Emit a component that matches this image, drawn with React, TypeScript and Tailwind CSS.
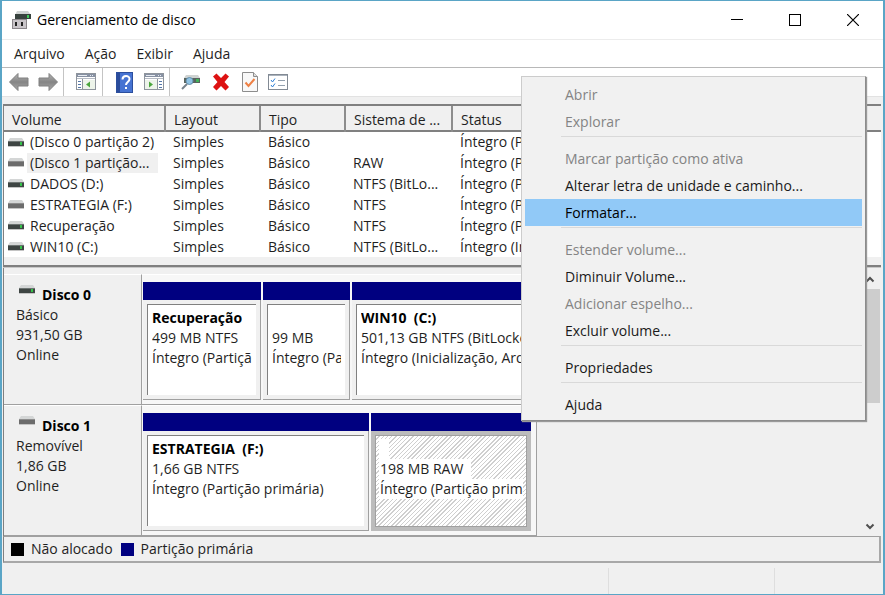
import React from "react";

type Drive = "fixed" | "removable";

function DriveIcon({ kind }: { kind: Drive }) {
  return (
    <svg width="16" height="9" viewBox="0 0 16 9" className="shrink-0" aria-hidden="true">
      <path d="M2 0h12l2 3H0z" fill="#d4d6d6" />
      <rect y="3" width="16" height="5" fill={kind === "fixed" ? "#3e4543" : "#6c6c6c"} />
      <rect y="3" width="16" height="1" fill={kind === "fixed" ? "#6d7472" : "#8d8d8d"} />
      <rect y="8" width="16" height="1" fill="#c4c4c4" />
      {kind === "fixed" && <rect x="12" y="4" width="2" height="3" fill="#35c24a" />}
    </svg>
  );
}

function AppIcon() {
  return (
    <svg width="20" height="20" viewBox="0 0 20 20" aria-hidden="true">
      <path d="M6 1h11l3 4H4z" fill="#cfd3d2" />
      <rect x="4" y="4" width="16" height="5" fill="#37423e" />
      <rect x="16" y="5" width="2" height="3" fill="#3fc95a" />
      <rect x="1.500" y="9.500" width="14" height="9" fill="#c9c5c9" stroke="#8b878b" />
      <rect x="4" y="12" width="2" height="4" fill="#222" />
      <rect x="10" y="12" width="2" height="4" fill="#222" />
    </svg>
  );
}

function ArrowIcon({ back }: { back?: boolean }) {
  return (
    <svg width="22" height="20" viewBox="0 0 22 20" aria-hidden="true">
      <defs>
        <linearGradient id={back ? "gb" : "gf"} x1="0" y1="0" x2="0" y2="1">
          <stop offset="0" stopColor="#b4b4b4" />
          <stop offset="0.5" stopColor="#858585" />
          <stop offset="1" stopColor="#a8a8a8" />
        </linearGradient>
      </defs>
      <path
        d={back ? "M1.500 10 L10 1.500 V6 H20 V14 H10 V18.500 Z" : "M20.500 10 L12 1.500 V6 H2 V14 H12 V18.500 Z"}
        fill={back ? "url(#gb)" : "url(#gf)"}
        stroke="#808080"
        strokeLinejoin="round"
      />
    </svg>
  );
}

function PaneIcon({ right }: { right?: boolean }) {
  return (
    <svg width="20" height="18" viewBox="0 0 20 18" aria-hidden="true">
      <rect x="0.500" y="0.500" width="19" height="16" fill="#fff" stroke="#8e949c" />
      <rect x="1" y="1" width="18" height="3" fill="#8791a3" />
      <path d="M14 2.500h1M16 2.500h1M2 2.500h9" stroke="#e8ecf2" />
      <path d="M1 5.500h18" stroke="#b4bac4" />
      {right ? (
        <>
          <rect x="1" y="7" width="12" height="9" fill="#edf4ea" />
          <path d="M5 8.500l4 3-4 3z" fill="#4aa63c" />
          <path d="M13.500 6v10" stroke="#8e949c" />
          <path d="M15 8.500h3M15 11.500h3M15 14.500h3" stroke="#5577a8" />
        </>
      ) : (
        <>
          <rect x="7" y="7" width="12" height="9" fill="#edf4ea" />
          <path d="M14 8.500l-4 3 4 3z" fill="#4aa63c" />
          <path d="M6.500 6v10" stroke="#8e949c" />
          <path d="M2 8.500h3M2 11.500h3M2 14.500h3" stroke="#5577a8" />
        </>
      )}
    </svg>
  );
}

function HelpIcon() {
  return (
    <svg width="17" height="21" viewBox="0 0 17 21" aria-hidden="true">
      <rect x="0.500" y="0.500" width="16" height="20" fill="#4673d2" stroke="#2c4f9e" />
      <rect x="1" y="1" width="3" height="19" fill="#2a4c9c" />
      <path d="M6.500 7.500c0-4.500 7-4.500 7-.5 0 3-3.500 3-3.500 6" fill="none" stroke="#fff" strokeWidth="2" />
      <rect x="9" y="15" width="2" height="2" fill="#fff" />
    </svg>
  );
}

function RescanIcon() {
  return (
    <svg width="20" height="18" viewBox="0 0 20 18" aria-hidden="true">
      <path d="M5 2h12l2 3H3z" fill="#cfd3d2" />
      <rect x="3" y="5" width="16" height="5" fill="#59645f" />
      <rect x="15" y="6" width="3" height="3" fill="#40b457" />
      <circle cx="8.500" cy="8" r="3.500" fill="#8fc3e4" stroke="#648fac" />
      <path d="M6 11l-5 5" stroke="#77828c" strokeWidth="2" />
    </svg>
  );
}

function DeleteIcon() {
  return (
    <svg width="18" height="18" viewBox="0 0 18 18" aria-hidden="true">
      <path
        d="M4.500 0.500L9 5l4.500-4.500 3.500 3L12.500 9l4.500 5-3.500 3.500L9 13l-4.500 4.500L1 14l4.500-5L1 3.500z"
        fill="#dd1212"
      />
    </svg>
  );
}

function CheckDocIcon() {
  return (
    <svg width="16" height="20" viewBox="0 0 16 20" aria-hidden="true">
      <path d="M0.500 0.500h11l4 4v15h-15z" fill="#f8f8f8" stroke="#8d8d8d" />
      <path d="M11.500 0.500v4h4" fill="#ddd" stroke="#8d8d8d" />
      <path d="M3.500 10.500l3 3.500 6-7" fill="none" stroke="#ee8044" strokeWidth="2" />
    </svg>
  );
}

function ListIcon() {
  return (
    <svg width="20" height="16" viewBox="0 0 20 16" aria-hidden="true">
      <rect x="0.500" y="0.500" width="19" height="15" fill="#fff" stroke="#828a94" />
      <rect x="1" y="1" width="18" height="1" fill="#aab2bc" />
      <path d="M3 6l1.500 2L7 4.500M3 11l1.500 2L7 9.500" fill="none" stroke="#2d7fd6" />
      <path d="M10 6.500h7M10 11.500h7" stroke="#93a0ae" />
    </svg>
  );
}

function ToolButton({ label, width, children }: { label: string; width: string; children: React.ReactNode }) {
  return (
    <button type="button" aria-label={label} className={`flex h-7 items-center justify-center ${width}`}>
      {children}
    </button>
  );
}

function ToolDivider() {
  return <span className="h-7 w-px bg-[#c4c4c4]" />;
}

const volumes: { name: string; kind: Drive; fs: string; status: string; selected?: boolean }[] = [
  { name: "(Disco 0 partição 2)", kind: "fixed", fs: "", status: "Íntegro (Partição)" },
  { name: "(Disco 1 partição...", kind: "removable", fs: "RAW", status: "Íntegro (Partição)", selected: true },
  { name: "DADOS (D:)", kind: "fixed", fs: "NTFS (BitLo...", status: "Íntegro (Partição)" },
  { name: "ESTRATEGIA (F:)", kind: "removable", fs: "NTFS", status: "Íntegro (Partição)" },
  { name: "Recuperação", kind: "fixed", fs: "NTFS", status: "Íntegro (Partição)" },
  { name: "WIN10 (C:)", kind: "fixed", fs: "NTFS (BitLo...", status: "Íntegro (Inicialização)" },
];

const columns = ["Volume", "Layout", "Tipo", "Sistema de ...", "Status"];

function VolumeTable() {
  return (
    <div className="border-t-2 border-l border-[#808080] bg-white">
      <table className="w-full table-fixed border-collapse text-left">
        <colgroup>
          <col className="w-[161px]" />
          <col className="w-[95px]" />
          <col className="w-[85px]" />
          <col className="w-[107px]" />
          <col />
        </colgroup>
        <thead>
          <tr className="h-[24px] border-b-2 border-[#808080] bg-[#f0f0f0]">
            {columns.map((c) => (
              <th key={c} className="border-r-2 border-[#8c8c8c] pt-1 pl-2 font-normal last:border-r-0">
                {c}
              </th>
            ))}
          </tr>
        </thead>
        <tbody>
          {volumes.map((v) => (
            <tr key={v.name} className="h-[21px] whitespace-nowrap">
              <td className="p-0">
                <span className="flex items-center gap-[3px] pl-1">
                  <DriveIcon kind={v.kind} />
                  <span className={v.selected ? "w-[131px] bg-[#f0f0f0] pl-[3px]" : "pl-[3px]"}>{v.name}</span>
                </span>
              </td>
              <td className="p-0 pl-2">Simples</td>
              <td className="p-0 pl-2">Básico</td>
              <td className="p-0 pl-2">{v.fs}</td>
              <td className="overflow-hidden p-0 pl-2">{v.status}</td>
            </tr>
          ))}
        </tbody>
      </table>
      <div className="h-2 bg-[#f0f0f0]" />
    </div>
  );
}

type PartitionProps = { title: string; size: string; status: string; width: string; selected?: boolean };

function Partition({ title, size, status, width, selected }: PartitionProps) {
  return (
    <div className={`flex h-[118px] min-w-0 flex-col ${width}`}>
      <div className="h-[18px] bg-[#000080]" />
      {selected ? (
        <div className="flex-1 border-4 border-[#bcbcbc]">
          <div className="h-full border border-[#a0a0a0] bg-[repeating-linear-gradient(135deg,#ffffff_0px,#ffffff_2px,#cfcfcf_2px,#cfcfcf_3px)] px-[3px] pt-[3px] whitespace-nowrap">
            <div className="overflow-hidden">
              <span className="block h-5 w-[10px] bg-white" />
              <span className="block w-[92px] bg-white pl-px">{size}</span>
              <span className="block bg-white pl-px">{status}</span>
            </div>
          </div>
        </div>
      ) : (
        <div className="flex flex-1 flex-col border-r border-b border-[#a0a0a0] bg-[#f0f0f0] p-1">
          <div className="flex-1 border-t border-l border-[#808080] bg-white pt-[3px] pr-1 pl-1 whitespace-nowrap">
            <div className="overflow-hidden">
              <div className="h-5 font-bold whitespace-pre text-black">{title}</div>
              <div>{size}</div>
              <div>{status}</div>
            </div>
          </div>
        </div>
      )}
    </div>
  );
}

function DiskRow({
  name,
  kind,
  lines,
  fill,
  children,
}: {
  name: string;
  kind: Drive;
  lines: string[];
  fill?: boolean;
  children: React.ReactNode;
}) {
  return (
    <section className="flex h-[131px] leading-5">
      <div className="w-[138px] shrink-0 border-t border-r border-b border-t-white border-r-[#a0a0a0] border-b-[#a0a0a0] pt-[10px] pl-3">
        <h2 className="flex gap-[7px] pl-[3px] font-bold text-black">
          <DriveIcon kind={kind} />
          {name}
        </h2>
        {lines.map((l) => (
          <p key={l}>{l}</p>
        ))}
      </div>
      <div
        className={`flex min-w-0 gap-0.5 border-t border-b border-t-white border-b-[#a0a0a0] bg-[#f7f7f7] pt-[7px] pl-px ${
          fill ? "flex-1" : "border-r border-r-[#a0a0a0] pr-[5px]"
        }`}
      >
        {children}
      </div>
    </section>
  );
}

function Chevron({ up }: { up?: boolean }) {
  return (
    <svg width="10" height="7" viewBox="0 0 10 7" aria-hidden="true">
      <path d={up ? "M1.500 5.500L5 2l3.500 3.500" : "M1.500 1.500L5 5l3.500-3.500"} fill="none" stroke="#505050" strokeWidth="2" />
    </svg>
  );
}

const menuGroups: { label: string; disabled?: boolean; active?: boolean }[][] = [
  [
    { label: "Abrir", disabled: true },
    { label: "Explorar", disabled: true },
  ],
  [
    { label: "Marcar partição como ativa", disabled: true },
    { label: "Alterar letra de unidade e caminho..." },
    { label: "Formatar...", active: true },
  ],
  [
    { label: "Estender volume...", disabled: true },
    { label: "Diminuir Volume..." },
    { label: "Adicionar espelho...", disabled: true },
    { label: "Excluir volume..." },
  ],
  [{ label: "Propriedades" }],
  [{ label: "Ajuda" }],
];

function ContextMenu() {
  return (
    <div
      role="menu"
      className="absolute top-[75px] right-[17px] w-[345px] border border-t-[#cccccc] border-r-[#8c8c8c] border-b-[#8c8c8c] border-l-[#cccccc] bg-[#f1f1f1] px-[3px] pt-1 pb-[2px] shadow-[1px_1px_1px_#9a9a9a]"
    >
      {menuGroups.map((group, i) => (
        <div key={group[0].label} role="group">
          {i > 0 && <div className="mt-px mb-2 ml-[36px] h-px bg-[#d9d9d9]" />}
          {group.map((item) => (
            <button
              key={item.label}
              type="button"
              role="menuitem"
              disabled={item.disabled}
              className={`block h-[27px] w-full pl-10 text-left ${
                item.active ? "bg-[#91c9f7] text-black" : item.disabled ? "text-[#848484]" : "text-[#1a1a1a]"
              }`}
            >
              {item.label}
            </button>
          ))}
        </div>
      ))}
    </div>
  );
}

export default function App() {
  return (
    <div className="relative flex min-h-screen flex-col overflow-hidden border-t border-r-2 border-b-2 border-l-2 border-[#5aa5c6] bg-[#f0f0f0] font-['Open_Sans','Noto_Sans',sans-serif] text-[14px] leading-5 text-[#1f1f1f]">
      <header className="flex h-[39px] items-center border-b border-[#ececec] bg-white pr-px pl-[9px]">
        <AppIcon />
        <h1 className="flex-1 pl-[6px] text-black">Gerenciamento de disco</h1>
        <button type="button" aria-label="Minimizar" className="flex h-full w-[58px] items-center justify-center">
          <svg width="12" height="12" viewBox="0 0 12 12"><path d="M0 5.500h12" stroke="#000" /></svg>
        </button>
        <button type="button" aria-label="Maximizar" className="flex h-full w-[58px] items-center justify-center">
          <svg width="12" height="12" viewBox="0 0 12 12"><rect x="0.500" y="0.500" width="11" height="11" fill="none" stroke="#000" /></svg>
        </button>
        <button type="button" aria-label="Fechar" className="flex h-full w-[58px] items-center justify-center">
          <svg width="12" height="12" viewBox="0 0 12 12"><path d="M0 0l12 12M12 0L0 12" stroke="#000" strokeWidth="1.2" /></svg>
        </button>
      </header>

      <nav className="flex h-[28px] items-center gap-5 border-b border-[#b8b8b8] bg-white pl-3">
        <button type="button">Arquivo</button>
        <button type="button">Ação</button>
        <button type="button">Exibir</button>
        <button type="button">Ajuda</button>
      </nav>

      <div className="flex h-[29px] items-center border-b border-[#e2e2e2] bg-white pl-[3px]">
        <ToolButton label="Voltar" width="w-7"><ArrowIcon back /></ToolButton>
        <ToolButton label="Avançar" width="w-[30px]"><ArrowIcon /></ToolButton>
        <ToolDivider />
        <ToolButton label="Mostrar árvore" width="w-[38px] pl-1.5"><PaneIcon /></ToolButton>
        <ToolDivider />
        <ToolButton label="Ajuda" width="w-9 pl-1.5"><HelpIcon /></ToolButton>
        <ToolButton label="Mostrar painel de ações" width="w-[30px]"><PaneIcon right /></ToolButton>
        <ToolDivider />
        <ToolButton label="Examinar discos novamente" width="w-9 pl-1.5"><RescanIcon /></ToolButton>
        <ToolButton label="Excluir" width="w-[30px]"><DeleteIcon /></ToolButton>
        <ToolButton label="Propriedades" width="w-7"><CheckDocIcon /></ToolButton>
        <ToolButton label="Configurações" width="w-7"><ListIcon /></ToolButton>
      </div>

      <main className="mt-[7px] mr-[2px] ml-px flex flex-1 flex-col">
        <VolumeTable />
        <div className="h-[3px] border-t-2 border-b border-t-[#808080] border-b-[#c8c8c8]" />
        <div className="flex flex-1 border-l border-[#808080]">
          <div className="min-w-0 flex-1 pt-[6px]">
            <DiskRow name="Disco 0" kind="fixed" lines={["Básico", "931,50 GB", "Online"]} fill>
              <Partition width="w-[118px]" title="Recuperação" size="499 MB NTFS" status="Íntegro (Partição)" />
              <Partition width="w-[87px]" title=" " size="99 MB" status="Íntegro (Partição)" />
              <Partition
                width="flex-1"
                title="WIN10  (C:)"
                size="501,13 GB NTFS (BitLocker)"
                status="Íntegro (Inicialização, Arquivo)"
              />
            </DiskRow>
            <DiskRow name="Disco 1" kind="removable" lines={["Removível", "1,86 GB", "Online"]}>
              <Partition
                width="w-[226px]"
                title="ESTRATEGIA  (F:)"
                size="1,66 GB NTFS"
                status="Íntegro (Partição primária)"
              />
              <Partition width="w-[160px]" title="" size="198 MB RAW" status="Íntegro (Partição primária)" selected />
            </DiskRow>
          </div>
          <div className="mr-px flex w-5 flex-col items-center pt-2 pb-[6px]">
            <Chevron up />
            <div className="mt-[6px] h-[114px] w-full bg-[#cdcdcd]" />
            <div className="flex-1" />
            <Chevron />
          </div>
        </div>
        <footer className="flex h-[27px] items-center border-t border-r-2 border-b-2 border-l border-t-[#a0a0a0] border-r-[#a8a8a8] border-b-[#a8a8a8] border-l-[#808080] pl-[7px]">
          <span className="size-[13px] bg-black" />
          <span className="pl-[7px]">Não alocado</span>
          <span className="ml-2 size-[13px] bg-[#000080]" />
          <span className="pl-[7px]">Partição primária</span>
        </footer>
      </main>

      <div className="mt-[5px] flex h-[26px]">
        <div className="flex-1 border-r border-[#dedede]" />
        <div className="w-[166px] border-r border-[#dedede]" />
        <div className="w-[108px]" />
      </div>

      <ContextMenu />
    </div>
  );
}
